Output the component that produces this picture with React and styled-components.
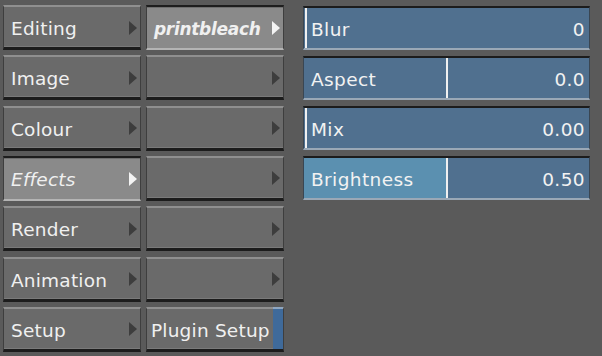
import React from "react";
import styled, { createGlobalStyle, css } from "styled-components";

const Global = createGlobalStyle`
  html, body { margin: 0; padding: 0; background: #5a5a5a; }
  body { width: 602px; height: 356px; overflow: hidden; font-family: "DejaVu Sans", "Liberation Sans", sans-serif; }
`;

const Page = styled.div`
  display: flex;
  align-items: flex-start;
  gap: 5px;
  padding: 5px 0 0 3px;
`;

const Column = styled.div`
  display: flex;
  flex-direction: column;
  gap: ${(p) => (p.$panel ? "6px" : "5.33px")};
  width: ${(p) => (p.$panel ? "287px" : "138px")};
  ${(p) =>
    p.$panel &&
    css`
      margin-left: 14px;
      padding-top: 1px;
    `}
`;

const Button = styled.div`
  box-sizing: border-box;
  height: 45px;
  display: flex;
  align-items: center;
  justify-content: space-between;
  padding: 3px 3px 0 7px;
  color: #f0f0f0;
  font-size: 18.5px;
  letter-spacing: 0.2px;
  background: #6a6a6a;
  border-left: 1px solid #3e3e3e;
  border-right: 1px solid #3e3e3e;
  border-top: 2px solid #8f8f8f;
  border-bottom: 3px solid #1c1c1c;
  box-shadow: inset 0 -1px 0 #7a7a7a;
  white-space: nowrap;
  ${(p) =>
    p.$selected &&
    css`
      background: #8a8a8a;
      border-top: 2px solid #1e1e1e;
      border-bottom: 2px solid #b4b4b4;
      box-shadow: inset 0 1px 0 #6f6f6f;
      font-style: italic;
      font-weight: ${p.$bold ? 700 : 400};
      font-size: ${p.$bold ? "17px" : "18.5px"};
      letter-spacing: ${p.$bold ? "-0.3px" : "0.2px"};
    `}
  ${(p) =>
    p.$plugin &&
    css`
      padding-right: 0;
      padding-left: 4px;
    `}
`;

const Arrow = styled.span`
  width: 0;
  height: 0;
  margin-top: -2px;
  border-top: 7px solid transparent;
  border-bottom: 7px solid transparent;
  border-left: 8px solid ${(p) => (p.$light ? "#f4f4f4" : "#3d3d3d")};
`;

const BlueTab = styled.span`
  align-self: stretch;
  width: 10px;
  background: #3f6a9a;
  border-top: 2px solid #8fa6c0;
  margin-top: -5px;
`;

const Slider = styled.div`
  box-sizing: border-box;
  position: relative;
  height: 44px;
  display: flex;
  align-items: center;
  justify-content: space-between;
  padding: 2px 4px 0 7px;
  background: #50708f;
  border-top: 2px solid #1c1c1c;
  border-bottom: 2px solid #9aa8b6;
  border-left: 1px solid #3a4652;
  border-right: 1px solid #3a4652;
  color: #f2f2f2;
  font-size: 18.5px;
  letter-spacing: 0.4px;
  overflow: hidden;
`;

const Fill = styled.div`
  position: absolute;
  left: 0;
  top: 0;
  bottom: 0;
  background: ${(p) => (p.$hi ? "#5b90b0" : "transparent")};
  border-right: 2px solid #f0f0f0;
`;

const Label = styled.span`
  position: relative;
`;

const left = [
  { t: "Editing" },
  { t: "Image" },
  { t: "Colour" },
  { t: "Effects", sel: true },
  { t: "Render" },
  { t: "Animation" },
  { t: "Setup" },
];

const sliders = [
  { t: "Blur", v: "0", pos: 1 },
  { t: "Aspect", v: "0.0", pos: 142 },
  { t: "Mix", v: "0.00", pos: 1 },
  { t: "Brightness", v: "0.50", pos: 142, hi: true },
];

export default function App() {
  return (
    <>
      <Global />
      <Page>
        <Column>
          {left.map((b) => (
            <Button key={b.t} $selected={b.sel}>
              <span>{b.t}</span>
              <Arrow $light={b.sel} />
            </Button>
          ))}
        </Column>
        <Column>
          <Button $selected $bold>
            <span>printbleach</span>
            <Arrow $light />
          </Button>
          {[0, 1, 2, 3, 4].map((i) => (
            <Button key={i}>
              <span />
              <Arrow />
            </Button>
          ))}
          <Button $plugin>
            <span>Plugin Setup</span>
            <BlueTab />
          </Button>
        </Column>
        <Column $panel>
          {sliders.map((s) => (
            <Slider key={s.t}>
              <Fill $hi={s.hi} style={{ width: s.pos }} />
              <Label>{s.t}</Label>
              <Label>{s.v}</Label>
            </Slider>
          ))}
        </Column>
      </Page>
    </>
  );
}
